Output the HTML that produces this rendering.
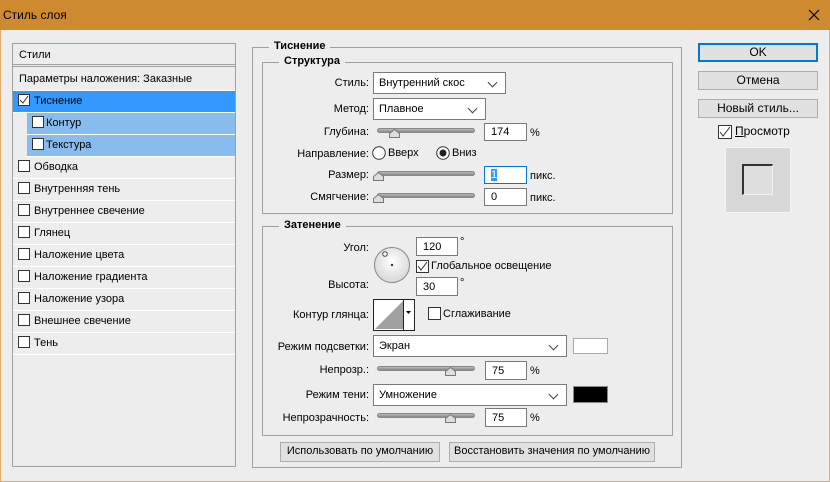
<!DOCTYPE html>
<html><head><meta charset="utf-8"><style>
*{box-sizing:border-box;margin:0;padding:0}
body{width:830px;height:482px;background:#ededed;font-family:"Liberation Sans",sans-serif;font-size:11px;color:#000;position:relative;overflow:hidden}
.a{position:absolute}
.win{left:0;top:0;width:830px;height:482px;border:1px solid #e0ac68;border-top:none}
.title{left:0;top:0;width:830px;height:30px;background:#cd8a2f}
.lp{left:12px;top:43px;width:224px;height:424px;border:1px solid #a0a0a0}
.row{position:absolute;left:0;width:222px;height:22px;border-bottom:1px solid #fff;line-height:21px;padding-left:21px}
.cb{position:absolute;width:12px;height:12px;border:1px solid #333;background:#fff}
.grp{border:1px solid #a0a0a0}
.gt{position:absolute;background:#ededed;font-weight:bold;padding:0 5px;line-height:13px}
.lbl{position:absolute;text-align:right;width:120px;line-height:14px}
.inp{position:absolute;background:#fff;border:1px solid #7a7a7a;padding-left:6px;line-height:17px}
.sel{position:absolute;background:#fff;border:1px solid #7a7a7a;padding-left:5px;line-height:21px}
.sel:after{content:"";position:absolute;right:9px;top:6px;width:6px;height:6px;border-right:1px solid #444;border-bottom:1px solid #444;transform:rotate(45deg)}
.trk{position:absolute;width:98px;height:5px;border-radius:3px;background:linear-gradient(#bbb,#888);border:1px solid #888}
.th{position:absolute;width:11px;height:9px}
.btn{position:absolute;background:#e1e1e1;border:1px solid #adadad;text-align:center;line-height:16px;font-size:12px}
.b2{font-size:11px;line-height:17px}
</style></head><body>
<div class="a win"></div>
<div class="a title"></div>
<div class="a" style="left:3px;top:8px;font-size:12px">Стиль слоя</div>
<svg class="a" style="left:808px;top:9px" width="12" height="12"><path d="M1 1L11 11M11 1L1 11" stroke="#000" stroke-width="1.2"/></svg>

<div class="a lp">
 <div class="row" style="top:0;padding-left:6px;height:23px;border-bottom:3px double #a0a0a0;line-height:22px">Стили</div>
 <div class="row" style="top:25px;padding-left:6px">Параметры наложения: Заказные</div>
 <div class="row" style="top:47px;background:#3399ff"></div>
 <div class="row" style="top:69px;left:14px;width:208px;background:#88bbee;padding-left:19px">Контур</div>
 <div class="row" style="top:91px;left:14px;width:208px;background:#88bbee;padding-left:19px">Текстура</div>
 <div class="row" style="top:113px">Обводка</div>
 <div class="row" style="top:135px">Внутренняя тень</div>
 <div class="row" style="top:157px">Внутреннее свечение</div>
 <div class="row" style="top:179px">Глянец</div>
 <div class="row" style="top:201px">Наложение цвета</div>
 <div class="row" style="top:223px">Наложение градиента</div>
 <div class="row" style="top:245px">Наложение узора</div>
 <div class="row" style="top:267px">Внешнее свечение</div>
 <div class="row" style="top:289px">Тень</div>
 <div class="row" style="top:47px;border:none">Тиснение</div>
</div>
<div class="cb" style="left:18px;top:94px"></div>
<svg class="a" style="left:18px;top:94px" width="12" height="12"><path d="M2 6L5 9L10 2" stroke="#333" fill="none"/></svg>
<div class="cb" style="left:32px;top:116px"></div>
<div class="cb" style="left:32px;top:138px"></div>
<div class="cb" style="left:18px;top:160px"></div>
<div class="cb" style="left:18px;top:182px"></div>
<div class="cb" style="left:18px;top:204px"></div>
<div class="cb" style="left:18px;top:226px"></div>
<div class="cb" style="left:18px;top:248px"></div>
<div class="cb" style="left:18px;top:270px"></div>
<div class="cb" style="left:18px;top:292px"></div>
<div class="cb" style="left:18px;top:314px"></div>
<div class="cb" style="left:18px;top:336px"></div>

<div class="a grp" style="left:252px;top:47px;width:430px;height:421px"></div>
<div class="gt" style="left:269px;top:40px">Тиснение</div>
<div class="a grp" style="left:262px;top:62px;width:411px;height:152px"></div>
<div class="gt" style="left:279px;top:55px">Структура</div>
<div class="lbl" style="left:249px;top:76px">Стиль:</div>
<div class="sel" style="left:373px;top:72px;width:133px;height:22px">Внутренний скос</div>
<div class="lbl" style="left:249px;top:102px">Метод:</div>
<div class="sel" style="left:373px;top:98px;width:113px;height:22px">Плавное</div>
<div class="lbl" style="left:249px;top:125px">Глубина:</div>
<div class="trk" style="left:377px;top:128px"></div>
<svg class="th" style="left:389px;top:129px"><path d="M0.5 8.5V4.5L5.5 0.5L10.5 4.5V8.5Z" fill="#ddd" stroke="#777"/></svg>
<div class="inp" style="left:484px;top:123px;width:43px;height:18px">174</div>
<div class="a" style="left:530px;top:127px">%</div>
<div class="lbl" style="left:249px;top:147px">Направление:</div>
<svg class="a" style="left:372px;top:146px" width="14" height="14"><circle cx="7" cy="7" r="6.3" fill="#fff" stroke="#333"/></svg>
<div class="a" style="left:388px;top:147px">Вверх</div>
<svg class="a" style="left:436px;top:146px" width="14" height="14"><circle cx="7" cy="7" r="6.3" fill="#fff" stroke="#333"/><circle cx="7" cy="7" r="3.5" fill="#222"/></svg>
<div class="a" style="left:452px;top:147px">Вниз</div>
<div class="lbl" style="left:249px;top:168px">Размер:</div>
<div class="trk" style="left:377px;top:171px"></div>
<svg class="th" style="left:373px;top:172px"><path d="M0.5 8.5V4.5L5.5 0.5L10.5 4.5V8.5Z" fill="#ddd" stroke="#777"/></svg>
<div class="inp" style="left:484px;top:166px;width:43px;height:18px;border-color:#0078d7"><span style="background:#3399ff;color:#fff">1</span></div>
<div class="a" style="left:530px;top:170px">пикс.</div>
<div class="lbl" style="left:249px;top:190px">Смягчение:</div>
<div class="trk" style="left:377px;top:193px"></div>
<svg class="th" style="left:373px;top:194px"><path d="M0.5 8.5V4.5L5.5 0.5L10.5 4.5V8.5Z" fill="#ddd" stroke="#777"/></svg>
<div class="inp" style="left:484px;top:188px;width:43px;height:18px">0</div>
<div class="a" style="left:530px;top:192px">пикс.</div>

<div class="a grp" style="left:262px;top:226px;width:411px;height:210px"></div>
<div class="gt" style="left:279px;top:219px">Затенение</div>
<div class="lbl" style="left:249px;top:241px">Угол:</div>
<svg class="a" style="left:373px;top:246px" width="38" height="38"><defs><radialGradient id="g" cx="50%" cy="40%"><stop offset="0" stop-color="#fff"/><stop offset="1" stop-color="#ddd"/></radialGradient></defs><circle cx="19" cy="19" r="17.5" fill="url(#g)" stroke="#888"/><circle cx="12" cy="8" r="2.3" fill="#fff" stroke="#444"/><circle cx="19" cy="19" r="1.2" fill="#333"/></svg>
<div class="inp" style="left:416px;top:237px;width:42px;height:19px;line-height:18px">120</div>
<div class="a" style="left:460px;top:236px">°</div>
<div class="cb" style="left:416px;top:260px;width:13px;height:13px"></div>
<svg class="a" style="left:416px;top:260px" width="13" height="13"><path d="M2 6L5 10L11 2" stroke="#333" fill="none"/></svg>
<div class="a" style="left:431px;top:260px">Глобальное освещение</div>
<div class="lbl" style="left:249px;top:278px">Высота:</div>
<div class="inp" style="left:416px;top:277px;width:42px;height:19px;line-height:19px">30</div>
<div class="a" style="left:460px;top:277px">°</div>
<div class="lbl" style="left:249px;top:308px">Контур глянца:</div>
<svg class="a" style="left:373px;top:299px" width="42" height="32"><rect x="0.5" y="0.5" width="41" height="31" fill="#fff" stroke="#222"/><path d="M2 30L30 2V30Z" fill="#a0a0a0"/><line x1="30.5" y1="0" x2="30.5" y2="32" stroke="#222"/><path d="M33 12h5l-2.5 3z" fill="#000"/></svg>
<div class="cb" style="left:428px;top:307px;width:13px;height:13px"></div>
<div class="a" style="left:443px;top:308px">Сглаживание</div>
<div class="lbl" style="left:249px;top:340px">Режим подсветки:</div>
<div class="sel" style="left:373px;top:335px;width:194px;height:22px">Экран</div>
<div class="a" style="left:573px;top:338px;width:35px;height:16px;background:#fff;border:1px solid #aaa"></div>
<div class="lbl" style="left:249px;top:363px">Непрозр.:</div>
<div class="trk" style="left:377px;top:366px"></div>
<svg class="th" style="left:445px;top:367px"><path d="M0.5 8.5V4.5L5.5 0.5L10.5 4.5V8.5Z" fill="#ddd" stroke="#777"/></svg>
<div class="inp" style="left:485px;top:361px;width:42px;height:19px;line-height:19px">75</div>
<div class="a" style="left:530px;top:365px">%</div>
<div class="lbl" style="left:249px;top:388px">Режим тени:</div>
<div class="sel" style="left:373px;top:384px;width:194px;height:22px">Умножение</div>
<div class="a" style="left:573px;top:386px;width:35px;height:17px;background:#000;border:1px solid #888"></div>
<div class="lbl" style="left:249px;top:411px">Непрозрачность:</div>
<div class="trk" style="left:377px;top:413px"></div>
<svg class="th" style="left:445px;top:414px"><path d="M0.5 8.5V4.5L5.5 0.5L10.5 4.5V8.5Z" fill="#ddd" stroke="#777"/></svg>
<div class="inp" style="left:485px;top:408px;width:42px;height:19px;line-height:19px">75</div>
<div class="a" style="left:530px;top:412px">%</div>
<div class="btn b2" style="left:280px;top:442px;width:160px;height:20px">Использовать по умолчанию</div>
<div class="btn b2" style="left:449px;top:442px;width:206px;height:20px">Восстановить значения по умолчанию</div>

<div class="btn" style="left:698px;top:43px;width:120px;height:19px;border:2px solid #0078d7;line-height:15px">OK</div>
<div class="btn" style="left:698px;top:71px;width:120px;height:19px">Отмена</div>
<div class="btn" style="left:698px;top:99px;width:120px;height:19px">Новый стиль...</div>
<div class="cb" style="left:718px;top:125px;width:14px;height:14px"></div>
<svg class="a" style="left:718px;top:125px" width="14" height="14"><path d="M2 7L5 11L12 2" stroke="#333" fill="none"/></svg>
<div class="a" style="left:735px;top:124px;font-size:12px"><u>П</u>росмотр</div>
<div class="a" style="left:725px;top:147px;width:66px;height:66px;background:#d7d7d7;border:1px solid #f4f4f4"></div>
<div class="a" style="left:742px;top:164px;width:31px;height:31px;background:#dedede;border-top:2px solid #333;border-left:2px solid #333;border-right:1px solid #f0f0f0;border-bottom:1px solid #f0f0f0"></div>
</body></html>
